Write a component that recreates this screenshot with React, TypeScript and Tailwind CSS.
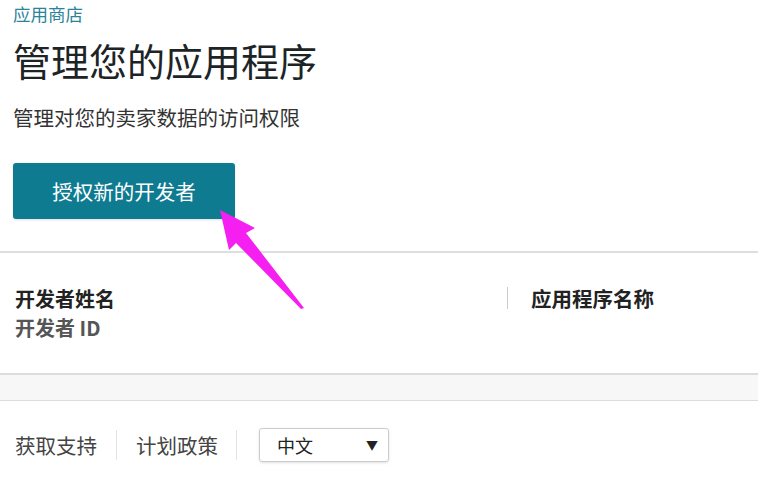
const font = { fontFamily: '"Noto Sans CJK SC", "Noto Sans", sans-serif' };

const Arrow = () => (
  <svg
    className="absolute left-0 top-0 pointer-events-none"
    width="758"
    height="486"
    viewBox="0 0 758 486"
  >
    <polygon
      points="220,210 255,228 246,233 304,308 301,309 236,243 229,250"
      fill="#f41ff0"
    />
  </svg>
);

export default function App() {
  return (
    <div className="relative w-[758px] h-[486px] bg-white overflow-hidden" style={font}>
      <div className="px-[13px]">
        <div className="pt-[4px] text-[17.5px] leading-[20px] text-[#2a8497]">应用商店</div>
        <h1 className="mt-[13px] text-[38px] leading-[45px] text-[#1d2426]">管理您的应用程序</h1>
        <p className="mt-[23px] text-[20.5px] leading-[24px] text-[#333]">管理对您的卖家数据的访问权限</p>
        <button className="mt-[34px] w-[222px] h-[56px] rounded-[3px] bg-[#0e7b91] text-white text-[20.5px] shadow-sm">
          授权新的开发者
        </button>
      </div>

      <div className="mt-[32px] border-t-2 border-[#dedede] h-[122px] flex pt-[31px]">
        <div className="w-[507px] pl-[15px]">
          <div className="text-[20px] leading-[29px] font-bold text-[#222]">开发者姓名</div>
          <div className="text-[20px] leading-[29px] font-semibold text-[#555]">开发者 ID</div>
        </div>
        <div className="flex items-start">
          <div className="mt-[3px] h-[22px] border-l border-[#ccc]" />
          <div className="ml-[23px] text-[20.5px] leading-[29px] font-bold text-[#222]">应用程序名称</div>
        </div>
      </div>

      <div className="h-[28px] border-t-2 border-b border-[#dcdcdc] bg-[#f7f7f7]" />

      <div className="flex items-center pl-[15px] mt-[27px] text-[20.5px] text-[#444]">
        <span>获取支持</span>
        <span className="mx-[19px] h-[30px] border-l border-[#e3e3e3]" />
        <span>计划政策</span>
        <span className="mx-[18px] h-[30px] border-l border-[#e3e3e3]" />
        <div className="ml-[4px] flex items-center justify-between w-[130px] h-[34px] border border-[#ccc] rounded-[3px] pl-[17px] pr-[10px] text-[18px] text-[#222] shadow-sm">
          <span>中文</span>
          <span className="text-[12px]">▼</span>
        </div>
      </div>

      <Arrow />
    </div>
  );
}
